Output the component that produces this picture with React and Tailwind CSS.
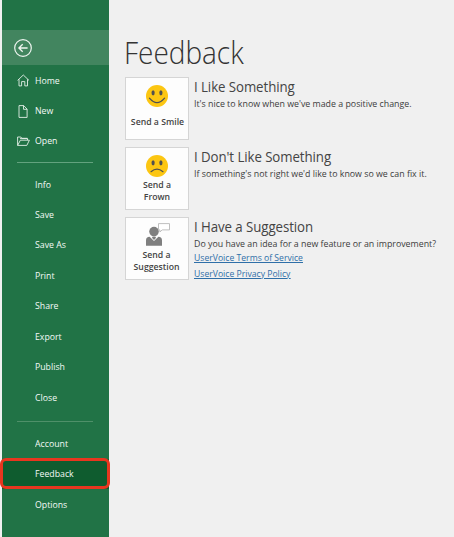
import React from "react";

const mainItems = ["Info", "Save", "Save As", "Print", "Share", "Export", "Publish", "Close"];

function HomeIcon() {
  return (
    <svg width="13" height="13" viewBox="0 0 13 13" fill="none" stroke="#e4efe8" strokeWidth="0.9">
      <path d="M0.6 6.4 6.3 1l5.7 5.4M2 5.3v6.6h2.6V7.6h3.2v4.3h2.7V5.3" />
    </svg>
  );
}

function NewIcon() {
  return (
    <svg width="13" height="13" viewBox="0 0 13 13" fill="none" stroke="#e4efe8" strokeWidth="0.9">
      <path d="M2 0.6h4.7l3.4 3.5v8.3H2zM6.5 0.6v3.7h3.6" />
    </svg>
  );
}

function OpenIcon() {
  return (
    <svg width="13" height="13" viewBox="0 0 13 13" fill="none" stroke="#e4efe8" strokeWidth="0.9">
      <path d="M0.6 10.4V2h3.2l1.1 1.3h5.6v1.8M0.6 10.4 3.4 5.2h9L9.8 10.4zM3 3.6h7" />
    </svg>
  );
}

function Face({ frown }) {
  return (
    <svg width="22" height="22" viewBox="0 0 22 22">
      <circle cx="11" cy="11" r="11" fill="#fcc612" />
      <ellipse cx="7.1" cy="7.8" rx="1.6" ry="2.6" fill="#505050" />
      <ellipse cx="14.9" cy="7.8" rx="1.6" ry="2.6" fill="#505050" />
      <path
        d={frown ? "M5 16.7Q11 11.6 17 16.7" : "M3.4 13.2Q11 22.2 18.6 13.2"}
        fill="none"
        stroke="#505050"
        strokeWidth="1.2"
        strokeLinecap="round"
      />
    </svg>
  );
}

function PersonIcon() {
  return (
    <svg className="mb-px ml-[2px]" width="24" height="23" viewBox="0 0 24 23">
      <circle cx="8" cy="8.6" r="4.8" fill="#7f7f7f" />
      <path d="M0 22.7v-5.2C0 15 1.3 14 3.6 13.8L8 18l4.4-4.2c2.3.2 3.6 1.2 3.6 3.7v5.2z" fill="#7f7f7f" />
      <path d="m6.3 13.8h3.4l.2 1.3L8 17l-1.9-1.9z" fill="#7f7f7f" />
      <path d="M12.5 0.6h11v6.3h-7.3L13.9 9V6.9h-1.4z" fill="#fff" stroke="#b8b8b8" strokeWidth="0.9" />
    </svg>
  );
}

function NavItem({ label, icon, active }) {
  return (
    <div
      className={
        "flex h-[30.45px] shrink-0 items-center pt-px pl-[15px] text-[9.5px] text-[#f4faf6] " +
        (active ? "bg-[#0f5c2f]" : "")
      }
    >
      <span className="w-[18px] shrink-0">{icon}</span>
      <span className="origin-left scale-x-[0.92] whitespace-nowrap">{label}</span>
    </div>
  );
}

function Option({ icon, label, title, text, single, children }) {
  return (
    <div className="flex h-[63px] gap-[5px]">
      <button className="flex w-[64px] shrink-0 flex-col items-center border border-[#d5d5d5] bg-[#fdfdfd] pt-[6px] text-[9.3px] leading-[12.3px] font-semibold text-[#444]">
        <span className="flex h-[23px] items-end">{icon}</span>
        <span className={"scale-x-[0.935] whitespace-nowrap " + (single ? "pt-[8.5px]" : "pt-[1.5px]")}>{label}</span>
      </button>
      <div className="whitespace-nowrap text-[#444]">
        <h2 className="h-[20px] origin-left scale-x-[0.97] text-[13.7px] leading-[20px] tracking-[-0.08px]">{title}</h2>
        <p className="h-[13px] origin-left scale-x-[0.953] text-[9.25px] leading-[14px] text-[#3c3c3c]">{text}</p>
        {children}
      </div>
    </div>
  );
}

export default function App() {
  return (
    <div className="flex h-[537px] w-[454px] overflow-hidden bg-[#f0f0f0] font-['Open_Sans',sans-serif]">
      <nav className="ml-[2px] flex w-[106.5px] shrink-0 flex-col bg-[#217346] pt-[30px]">
        <div className="flex h-[35px] shrink-0 items-center bg-[#42855f] pl-[12px]">
          <svg width="18" height="18" viewBox="0 0 18 18" fill="none" stroke="#eef5f0">
            <circle cx="9" cy="9" r="8.3" strokeWidth="1.2" />
            <path d="M13.6 9H5M8.7 5.2 4.9 9l3.8 3.8" strokeWidth="1.3" />
          </svg>
        </div>
        <NavItem label="Home" icon={<HomeIcon />} />
        <NavItem label="New" icon={<NewIcon />} />
        <NavItem label="Open" icon={<OpenIcon />} />
        <div className="mt-[5.6px] mb-[6px] ml-[15px] h-px w-[76px] shrink-0 bg-[#63a27e]" />
        {mainItems.map((label) => (
          <NavItem key={label} label={label} />
        ))}
        <div className="mt-[8.8px] mb-[6px] ml-[15px] h-px w-[76px] shrink-0 bg-[#4f9069]" />
        <NavItem label="Account" />
        <div className="relative">
          <NavItem label="Feedback" active />
          <div className="absolute top-[-1px] left-[-2px] h-[31px] w-[110px] rounded-[6px] border-3 border-[#e8361f]" />
        </div>
        <NavItem label="Options" />
      </nav>
      <main className="flex flex-col pt-[32px] pl-[16.5px]">
        <h1 className="-ml-[1px] h-[45px] origin-left scale-x-[0.92] text-[30.4px] leading-[41px] font-light text-[#333]">
          Feedback
        </h1>
        <div className="flex flex-col gap-[7px]">
          <Option
            icon={<Face />}
            label="Send a Smile"
            single
            title="I Like Something"
            text="It's nice to know when we've made a positive change."
          />
          <Option
            icon={<Face frown />}
            label={<>Send a<br />Frown</>}
            title="I Don't Like Something"
            text="If something's not right we'd like to know so we can fix it."
          />
          <Option
            icon={<PersonIcon />}
            label={<>Send a<br />Suggestion</>}
            title="I Have a Suggestion"
            text="Do you have an idea for a new feature or an improvement?"
          >
            <div className="flex origin-left scale-x-[0.933] flex-col items-start gap-[3px] pt-[0.5px] text-[9.25px] leading-[13px] text-[#2f6fa8] underline decoration-1">
              <a>UserVoice Terms of Service</a>
              <a>UserVoice Privacy Policy</a>
            </div>
          </Option>
        </div>
      </main>
    </div>
  );
}
